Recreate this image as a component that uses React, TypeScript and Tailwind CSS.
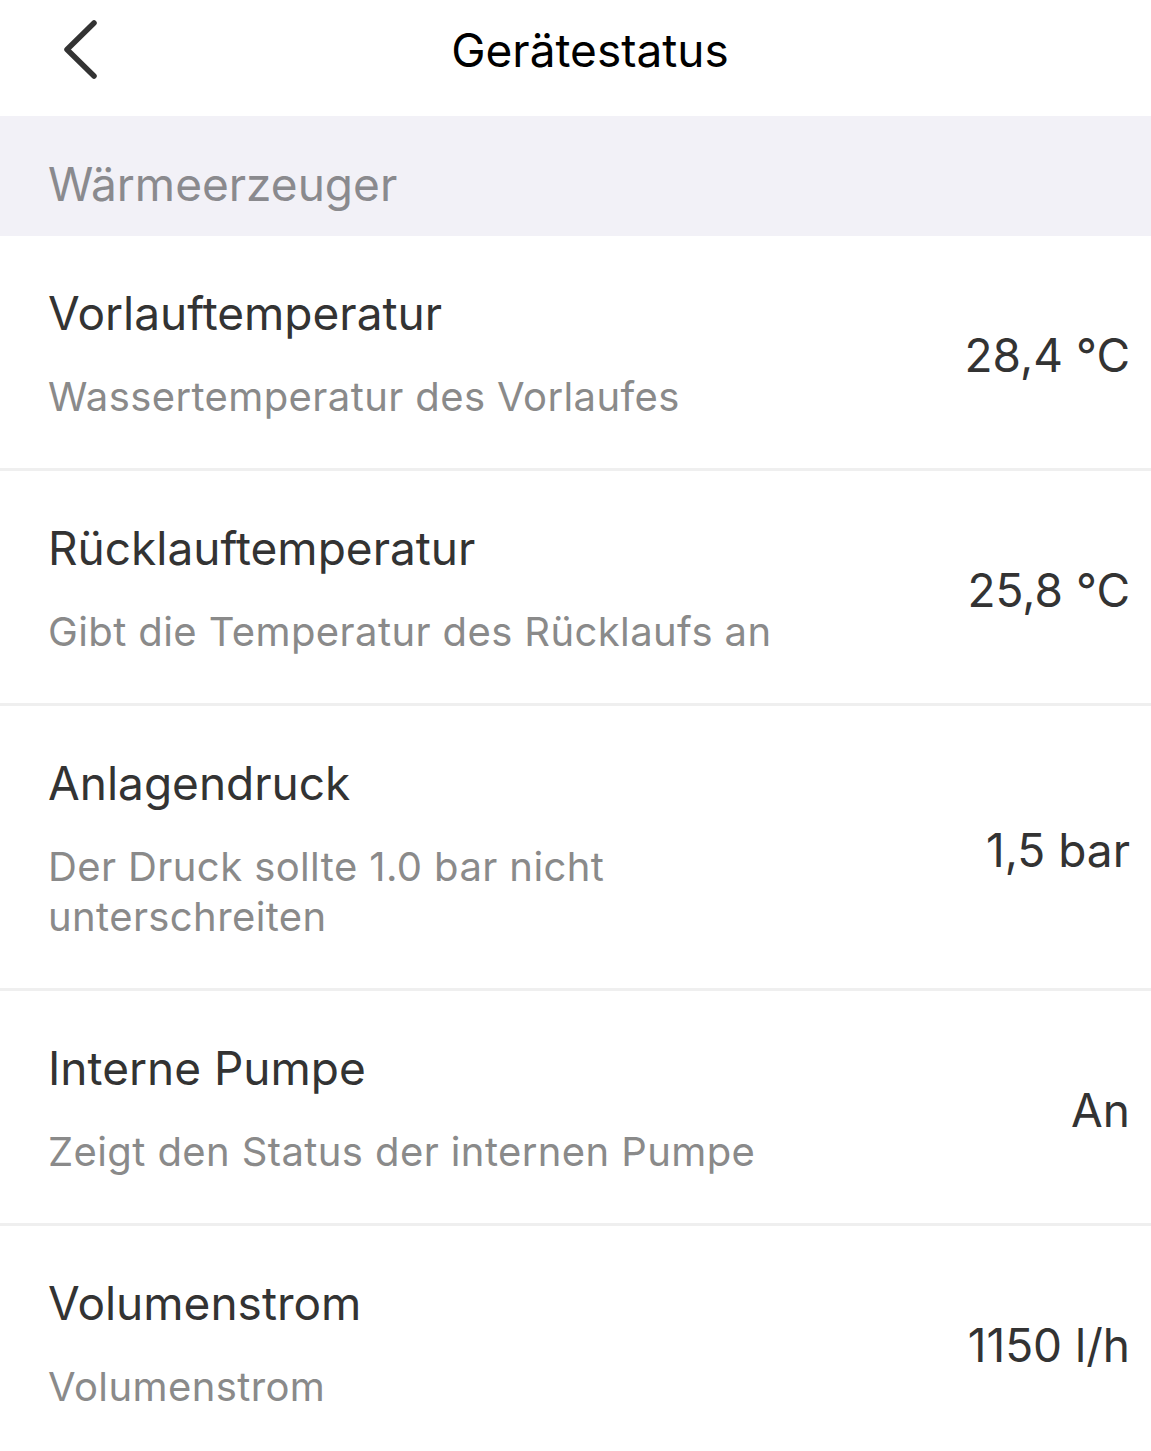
import React from "react";

type StatusRow = {
  title: string;
  subtitle: string;
  value: string;
};

const rows: StatusRow[] = [
  {
    title: "Vorlauftemperatur",
    subtitle: "Wassertemperatur des Vorlaufes",
    value: "28,4 °C",
  },
  {
    title: "Rücklauftemperatur",
    subtitle: "Gibt die Temperatur des Rücklaufs an",
    value: "25,8 °C",
  },
  {
    title: "Anlagendruck",
    subtitle: "Der Druck sollte 1.0 bar nicht unterschreiten",
    value: "1,5 bar",
  },
  {
    title: "Interne Pumpe",
    subtitle: "Zeigt den Status der internen Pumpe",
    value: "An",
  },
  {
    title: "Volumenstrom",
    subtitle: "Volumenstrom",
    value: "1150 l/h",
  },
];

function BackIcon() {
  return (
    <svg width="40" height="60" viewBox="0 0 40 60" fill="none">
      <path
        d="M33 3 L6 29.5 L33 56"
        stroke="#333333"
        strokeWidth="5.5"
        strokeLinecap="round"
        strokeLinejoin="round"
      />
    </svg>
  );
}

function Row({ row }: { row: StatusRow }) {
  return (
    <div className="flex items-center border-b-[3px] border-[#efefef] bg-white pl-[48px] pr-[21px] pt-[51px] pb-[46px]">
      <div className="max-w-[770px] flex-1">
        <div className="text-[46px] leading-[52px] text-[#333333]">
          {row.title}
        </div>
        <div className="mt-[33px] text-[40px] leading-[50px] tracking-[0.01em] text-[#8a8a8a]">
          {row.subtitle}
        </div>
      </div>
      <div className="ml-auto text-[46px] leading-[52px] text-[#333333]">
        {row.value}
      </div>
    </div>
  );
}

export default function App() {
  return (
    <div
      className="h-[1451px] w-full overflow-hidden bg-white"
      style={{ fontFamily: "Inter, 'Noto Sans', sans-serif" }}
    >
      <header className="flex h-[116px] items-start pt-[20px]">
        <div className="flex w-[180px] items-center pl-[61px]">
          <BackIcon />
        </div>
        <h1 className="flex-1 text-center text-[46px] font-normal leading-[60px] text-black">
          Gerätestatus
        </h1>
        <div className="w-[151px]" />
      </header>

      <div className="flex h-[120px] items-center bg-[#f2f1f7] pl-[48px] pt-[15px]">
        <span className="text-[46px] leading-[52px] text-[#8a8a8e]">
          Wärmeerzeuger
        </span>
      </div>

      <div>
        {rows.map((row) => (
          <Row key={row.title} row={row} />
        ))}
      </div>
    </div>
  );
}
